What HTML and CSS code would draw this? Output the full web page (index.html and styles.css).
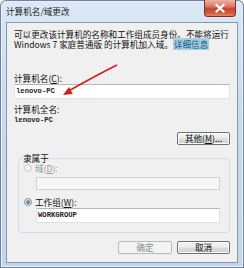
FILE: index.html
```html
<!DOCTYPE html>
<html lang="zh-CN">
<head>
<meta charset="utf-8">
<title>计算机名/域更改</title>
<link rel="stylesheet" href="styles.css">
</head>
<body>
<div class="window">
  <div class="titlebar">
    <span class="title">计算机名/域更改</span>
    <div class="close">
      <svg width="32" height="17" viewBox="0 0 32 17"><path d="M12.5 5 L19.5 11.5 M19.5 5 L12.5 11.5" stroke="#fff" stroke-width="2.2" stroke-linecap="square"/></svg>
    </div>
  </div>
  <div class="client">
    <p class="desc">可以更改该计算机的名称和工作组成员身份。不能将运行<br>Windows 7 家庭普通版 的计算机加入域。<span class="link">详细信息</span></p>
    <div class="label l1">计算机名(<u>C</u>):</div>
    <div class="field f1">lenovo-PC</div>
    <div class="label l2">计算机全名:</div>
    <div class="value">lenovo-PC</div>
    <div class="btnrow row-other"><button class="btn">其他(<u>M</u>)...</button></div>
    <fieldset class="group">
      <legend>隶属于</legend>
      <div class="radiorow disabled"><span class="radio"></span>域(<u>D</u>):</div>
      <div class="field small disabled-field"></div>
      <div class="radiorow second"><span class="radio checked"></span>工作组(<u>W</u>):</div>
      <div class="field wg">WORKGROUP</div>
    </fieldset>
    <div class="btnrow row-ok">
      <button class="btn ok" disabled>确定</button>
      <button class="btn cancel">取消</button>
    </div>
  </div>
  <svg class="arrow" width="244" height="268" viewBox="0 0 244 268">
    <path d="M117 65 Q95 76 69.5 90.5" fill="none" stroke="#cf1f1f" stroke-width="1.6"/>
    <polygon points="63,95 69,87 72.8,94" fill="#cf1f1f"/>
  </svg>
</div>
</body>
</html>
```
FILE: styles.css
```css
* { box-sizing: border-box; }
html, body { margin: 0; padding: 0; }
body {
  width: 244px;
  height: 268px;
  overflow: hidden;
  font-family: "Noto Sans CJK SC", "Noto Sans", sans-serif;
  font-size: 8.6px;
  color: #111;
}
.window {
  position: relative;
  width: 244px;
  height: 268px;
  background: linear-gradient(#dce8f5, #c9dbee 40%, #c2d5ea);
  border-radius: 6px 6px 0 0;
  box-shadow: inset 0 0 0 1px #6f849c, inset 0 0 0 2px #e9f1fa;
}
.titlebar {
  height: 22px;
  display: flex;
  align-items: flex-start;
}
.title {
  line-height: 22px;
  padding-left: 6px;
  color: #1a1a1a;
}
.close {
  margin-left: auto;
  margin-right: 8px;
  width: 32px;
  height: 17px;
  border: 1px solid #7d2f25;
  border-top: none;
  border-radius: 0 0 4px 4px;
  background: linear-gradient(#eab3a3 0%, #dc7a62 40%, #c8442c 55%, #d2583d 80%, #e08a6c 100%);
  position: relative;
  overflow: hidden;
}
.close svg { position: absolute; left: -1px; top: 0; }
.client {
  margin: 0 6px;
  height: 241px;
  border: 1px solid #8598ae;
  background: #f0f0f0;
}
.desc {
  margin: 6px 0 0 7px;
  line-height: 10px;
  white-space: nowrap;
}
.link {
  background: #a9cedf;
  color: #0f5c8a;
  padding: 0 1px;
}
.label, .value {
  padding-left: 7px;
  line-height: 10px;
  white-space: nowrap;
}
.l1 { margin-top: 24px; }
.l2 { margin-top: 5px; }
.value {
  margin-top: 1px;
  font-family: "Liberation Mono", monospace;
  font-size: 7.2px;
  font-weight: bold;
  color: #222;
}
.field {
  background: #fff;
  border: 1px solid #dfe3e8;
  border-top-color: #b3b6bc;
  font-family: "Liberation Mono", monospace;
  font-size: 7.2px;
  font-weight: bold;
  color: #222;
  padding-left: 1px;
  white-space: nowrap;
}
.f1 {
  margin: 1px 7px 0 7px;
  height: 15px;
  line-height: 13px;
}
.btnrow {
  display: flex;
  justify-content: flex-end;
  gap: 5px;
  padding-right: 7px;
}
.row-other { margin-top: 7px; }
.row-ok { margin-top: 8px; }
.btn {
  width: 53px;
  height: 13px;
  padding: 0;
  margin: 0;
  font-family: "Noto Sans CJK SC", "Noto Sans", sans-serif;
  font-size: 8.6px;
  line-height: 11px;
  color: #111;
  border: 1px solid #707070;
  border-radius: 2px;
  background: linear-gradient(#f3f3f3 0%, #ebebeb 48%, #dddddd 52%, #cfcfcf 100%);
  box-shadow: inset 0 0 0 1px #fcfcfc;
}
.btn.ok {
  width: 54px;
  color: #8a8a8a;
  border-color: #b5b9bc;
  background: #f4f4f4;
  box-shadow: none;
}
.group {
  margin: 8px 7px 0 11px;
  padding: 0 0 9px 0;
  border: 1px solid #d3dce2;
  border-radius: 3px;
  min-width: 0;
}
.group legend {
  margin-left: 3px;
  padding: 0 1px;
  line-height: 10px;
}
.radiorow {
  display: flex;
  align-items: center;
  height: 10px;
  line-height: 10px;
  padding-left: 5px;
}
.radiorow.disabled { color: #9a9a9a; }
.radiorow.second { margin-top: 7px; }
.radio {
  width: 8px;
  height: 8px;
  margin-right: 3px;
  border-radius: 50%;
  border: 1px solid #8c8f94;
  background: radial-gradient(circle at 40% 35%, #ffffff, #dcdcdc);
  display: flex;
  align-items: center;
  justify-content: center;
}
.radiorow.disabled .radio {
  border-color: #c9cbce;
  background: #f2f2f2;
}
.radio.checked::after {
  content: "";
  width: 4px;
  height: 4px;
  border-radius: 50%;
  background: radial-gradient(circle at 35% 35%, #7fb0e0, #1d4f86);
}
.small {
  margin: 4px 0 0 17px;
  width: 184px;
  height: 13px;
}
.disabled-field {
  background: #f6f6f6;
  border: 1px solid #cfd2d5;
}
.wg {
  margin: 1px 0 0 17px;
  width: 184px;
  height: 15px;
  line-height: 13px;
}
.arrow {
  position: absolute;
  left: 0;
  top: 0;
  pointer-events: none;
}
```
